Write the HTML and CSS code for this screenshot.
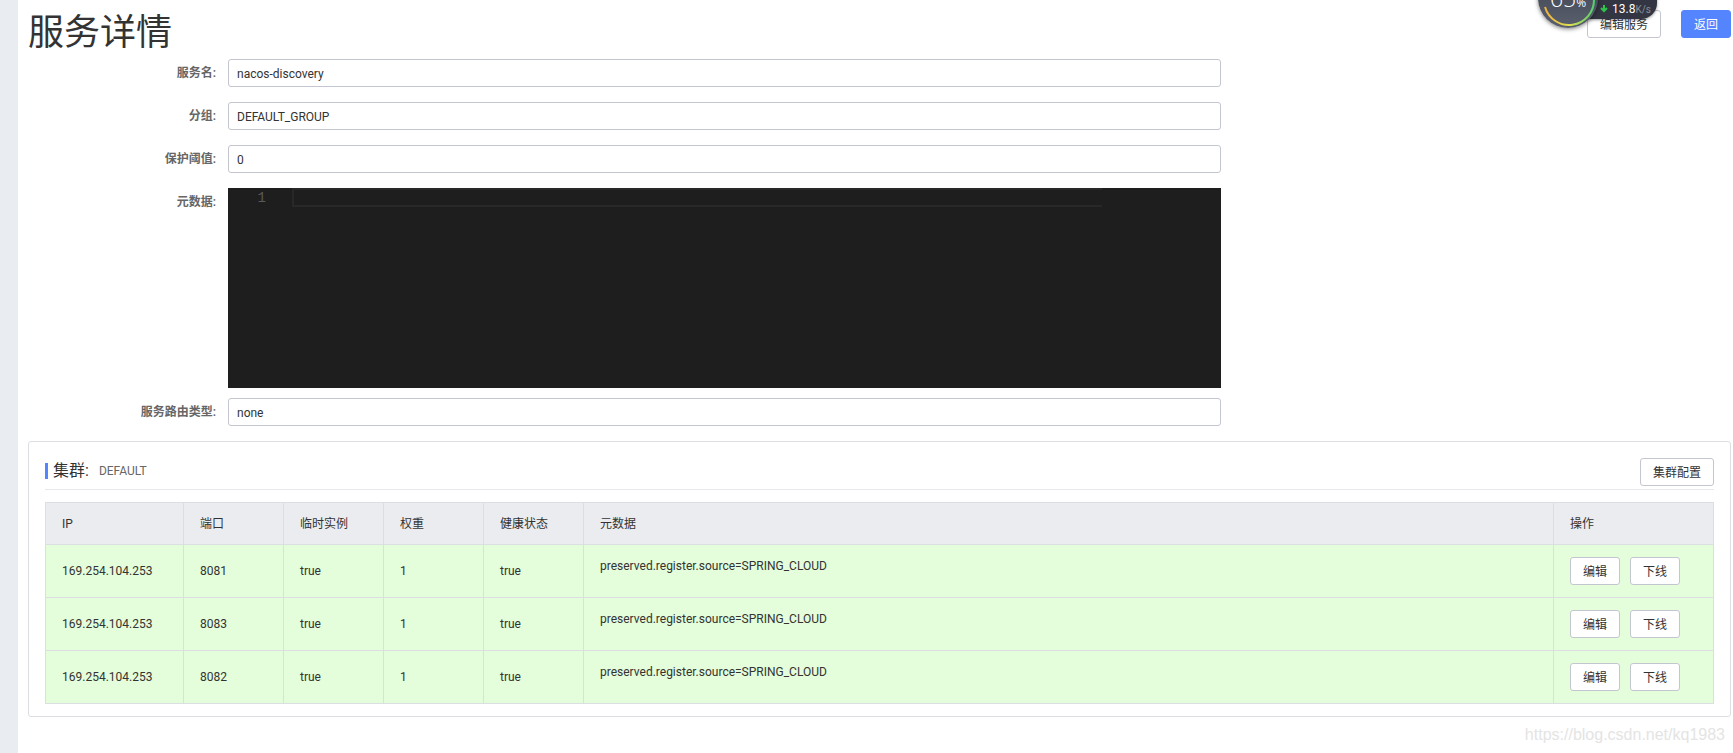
FILE: index.html
```html
<!DOCTYPE html>
<html lang="zh-CN">
<head>
<meta charset="utf-8">
<title>服务详情</title>
<link rel="stylesheet" href="styles.css">
</head>
<body>
<div class="layout">
  <aside class="rail"></aside>
  <main class="page">
    <header class="page-head">
      <h1 class="page-title">服务详情</h1>
      <div class="head-actions">
        <button class="btn" type="button">编辑服务</button>
        <button class="btn btn-primary" type="button">返回</button>
      </div>
    </header>

    <form class="form">
      <div class="field">
        <label class="label" for="name">服务名:</label>
        <input class="input" id="name" value="nacos-discovery" readonly>
      </div>
      <div class="field">
        <label class="label" for="group">分组:</label>
        <input class="input" id="group" value="DEFAULT_GROUP" readonly>
      </div>
      <div class="field">
        <label class="label" for="threshold">保护阈值:</label>
        <input class="input" id="threshold" value="0" readonly>
      </div>
      <div class="field field-editor">
        <label class="label" for="metadata">元数据:</label>
        <div class="editor">
          <span class="line-number">1</span>
          <textarea class="code" id="metadata" rows="1" readonly></textarea>
        </div>
      </div>
      <div class="field">
        <label class="label" for="selector">服务路由类型:</label>
        <input class="input" id="selector" value="none" readonly>
      </div>
    </form>

    <section class="card">
      <div class="card-head">
        <h2 class="card-title">集群:</h2>
        <span class="card-subtitle">DEFAULT</span>
        <button class="btn card-action" type="button">集群配置</button>
      </div>
      <table class="table">
        <colgroup>
          <col class="col-ip"><col class="col-small"><col class="col-small"><col class="col-small"><col class="col-small"><col><col class="col-actions">
        </colgroup>
        <thead>
          <tr><th>IP</th><th>端口</th><th>临时实例</th><th>权重</th><th>健康状态</th><th>元数据</th><th>操作</th></tr>
        </thead>
        <tbody>
          <tr>
            <td>169.254.104.253</td><td>8081</td><td>true</td><td>1</td><td>true</td>
            <td><p class="meta">preserved.register.source=SPRING_CLOUD</p></td>
            <td><div class="row-actions"><button class="btn" type="button">编辑</button><button class="btn" type="button">下线</button></div></td>
          </tr>
          <tr>
            <td>169.254.104.253</td><td>8083</td><td>true</td><td>1</td><td>true</td>
            <td><p class="meta">preserved.register.source=SPRING_CLOUD</p></td>
            <td><div class="row-actions"><button class="btn" type="button">编辑</button><button class="btn" type="button">下线</button></div></td>
          </tr>
          <tr>
            <td>169.254.104.253</td><td>8082</td><td>true</td><td>1</td><td>true</td>
            <td><p class="meta">preserved.register.source=SPRING_CLOUD</p></td>
            <td><div class="row-actions"><button class="btn" type="button">编辑</button><button class="btn" type="button">下线</button></div></td>
          </tr>
        </tbody>
      </table>
    </section>
  </main>
</div>

<div class="monitor">
  <div class="speed">
    <svg class="arrow" viewBox="0 0 8 8"><path d="M4 0v6M1 3l3 3 3-3" fill="none" stroke="#2fc44a" stroke-width="2"/></svg>
    <span class="rate">13.8</span><span class="unit">K/s</span>
  </div>
  <div class="gauge">
    <svg class="ring" viewBox="0 0 60 60">
      <defs>
        <linearGradient id="arc" x1="0" x2="1"><stop offset="0" stop-color="#f0b040"/><stop offset=".5" stop-color="#e0e050"/><stop offset="1" stop-color="#50d070"/></linearGradient>
      </defs>
      <path d="M7 39A25 25 0 0 0 56 32" fill="none" stroke="url(#arc)" stroke-width="2"/>
    </svg>
    <span class="percent">65<small class="sign">%</small></span>
  </div>
</div>
<div class="watermark">https://blog.csdn.net/kq1983</div>
</body>
</html>
```
FILE: styles.css
```css
* { box-sizing: border-box; }

body {
  margin: 0;
  background: #fff;
  color: #333;
  font-family: Roboto, "Noto Sans CJK SC", sans-serif;
  font-size: 12px;
  line-height: 18px;
}

button, input, textarea { font: inherit; color: inherit; }

.layout { display: flex; min-height: 100vh; }
.rail { flex: 0 0 18px; background: #e9edf2; }
.page { flex: 1; min-width: 0; padding: 10px 2px 0 10px; }

.page-head { display: flex; justify-content: space-between; align-items: flex-start; }
.page-title { margin: 0; font-size: 36px; font-weight: 400; line-height: 46px; padding-bottom: 3px; }
.head-actions { display: flex; gap: 20px; }

.btn {
  height: 28px;
  padding: 1px 12px 0;
  border: 1px solid #c4c6cf;
  border-radius: 3px;
  background: #fff;
  line-height: 26px;
  white-space: nowrap;
}
.btn-primary { border-color: #5584ff; background: #5584ff; color: #fff; }

.field { display: flex; margin-bottom: 15px; }
.field-editor { margin-bottom: 10px; }
.label {
  flex: 0 0 200px;
  padding: 1px 12px 0 0;
  color: #666;
  font-weight: 600;
  line-height: 27px;
  text-align: right;
}
.input {
  width: 58.33%;
  height: 28px;
  padding: 2px 8px 0;
  border: 1px solid #c4c6cf;
  border-radius: 3px;
  background: #fff;
  outline: none;
}
.editor {
  display: flex;
  align-items: flex-start;
  width: 58.33%;
  height: 200px;
  background: #1e1e1e;
}
.line-number {
  flex: 0 0 64px;
  padding-right: 26px;
  color: #5a5a5a;
  font-family: "Liberation Mono", monospace;
  font-size: 14px;
  line-height: 20px;
  text-align: right;
}
.code {
  flex: 1;
  height: 19px;
  margin-right: 119px;
  padding: 0;
  border: 2px solid #282828;
  border-right: 0;
  background: transparent;
  color: #d4d4d4;
  overflow: hidden;
  resize: none;
  outline: none;
}

.card { padding: 16px 16px 12px; border: 1px solid #dcdee3; border-radius: 3px; }
.card-head {
  display: flex;
  align-items: center;
  height: 32px;
  padding-bottom: 5px;
  margin-bottom: 12px;
  border-bottom: 1px solid #e6e7eb;
}
.card-title {
  margin: 0 10px 0 0;
  padding-left: 5px;
  border-left: 3px solid #5584ff;
  font-size: 16px;
  font-weight: 400;
  line-height: 16px;
}
.card-subtitle { color: #666; }
.card-action { align-self: flex-start; margin-left: auto; }

.table { width: 100%; border-collapse: collapse; table-layout: fixed; }
.col-ip { width: 138px; }
.col-small { width: 100px; }
.col-actions { width: 160px; }
.table th, .table td { padding: 0 16px; border: 1px solid #dcdee3; text-align: left; font-weight: 400; }
.table th { height: 42px; background: #ebecf0; }
.table td { height: 53px; background: #e4fdda; }
.meta { margin: 0 0 10px; }
.row-actions { display: flex; gap: 10px; }

.monitor { position: absolute; top: -32px; right: 74px; width: 121px; height: 60px; }
.gauge {
  position: absolute;
  left: 0;
  top: 0;
  width: 60px;
  height: 60px;
  border-radius: 50%;
  background: linear-gradient(#3c404c, #5a5f6e);
  box-shadow: 0 1px 4px rgba(0, 0, 0, .5);
  color: #fff;
  text-align: center;
}
.ring { position: absolute; inset: 0; width: 60px; height: 60px; }
.percent { position: relative; top: 18px; font: 300 23px/24px "Open Sans", sans-serif; white-space: nowrap; }
.sign { font-size: 12px; font-weight: 400; }
.speed {
  position: absolute;
  left: 30px;
  top: 11px;
  width: 89px;
  height: 40px;
  padding: 20px 0 0 32px;
  border-radius: 0 16px 16px 0;
  background: #333642;
  box-shadow: 0 1px 3px rgba(0, 0, 0, .4);
  color: #fff;
  font: 12px/20px Roboto, sans-serif;
  white-space: nowrap;
}
.arrow { width: 8px; height: 8px; margin-right: 1px; }
.unit { color: #8b8e98; font-size: 10px; }

.watermark {
  position: absolute;
  right: 8px;
  bottom: 8px;
  color: #e4e4e4;
  font: 16px/20px "Liberation Sans", Arial, sans-serif;
}
```
